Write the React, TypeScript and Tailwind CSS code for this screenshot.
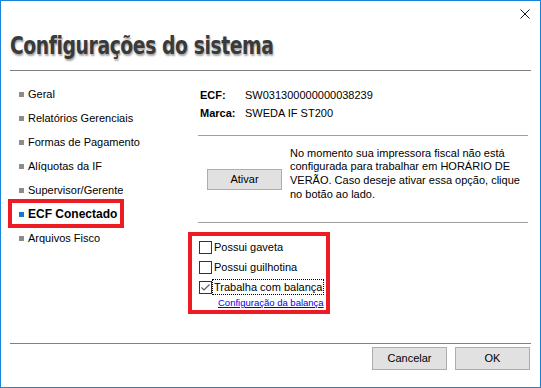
import React from 'react';

const navItems = [
  'Geral',
  'Relatórios Gerenciais',
  'Formas de Pagamento',
  'Alíquotas da IF',
  'Supervisor/Gerente',
  'ECF Conectado',
  'Arquivos Fisco',
];

const Checkbox: React.FC<{ label: string; checked?: boolean; focused?: boolean }> = ({
  label,
  checked = false,
  focused = false,
}) => (
  <div className="h-[20px] flex items-center">
    <span className="w-[13px] h-[13px] border border-[#333333] bg-white flex items-center justify-center">
      {checked && (
        <svg width="11" height="11" viewBox="0 0 11 11">
          <path d="M1.5 5.5 L4 8 L9.5 2.5" fill="none" stroke="#5a5a5a" strokeWidth="1.1" />
        </svg>
      )}
    </span>
    <span
      className={`ml-[1px] px-[1px] leading-[14px] ${
        focused ? 'outline outline-1 outline-dotted outline-black' : ''
      }`}
    >
      {label}
    </span>
  </div>
);

export default function App() {
  return (
    <div className="w-[541px] h-[388px] border border-[#1883d7] bg-white relative flex flex-col font-['Liberation_Sans',sans-serif] text-[11px] text-black overflow-hidden">
      {/* close */}
      <div className="h-[26px] flex justify-end items-start pt-[8px] pr-[10px]">
        <svg width="10" height="10" viewBox="0 0 10 10">
          <path d="M0.5 0.5 L9.5 9.5 M9.5 0.5 L0.5 9.5" stroke="#1a1a1a" strokeWidth="1" />
        </svg>
      </div>

      {/* title */}
      <div className="mx-[9px] h-[44px] border-b border-[#808080]">
        <h1 className="pt-[3px] origin-left scale-x-[0.835] font-['DejaVu_Sans_Condensed','DejaVu_Sans',sans-serif] font-bold text-[25px] leading-[32px] text-[#3a3a3a] tracking-[-0.5px] whitespace-nowrap [text-shadow:1px_2px_2px_rgba(0,0,0,0.35)]">
          Configurações do sistema
        </h1>
      </div>

      {/* body */}
      <div className="flex h-[272px]">
        <nav className="w-[197px] pt-[11px]">
          {navItems.map((item) => {
            const active = item === 'ECF Conectado';
            return (
              <div key={item} className="h-6 flex items-center pl-[18px]">
                <span className={`w-[5px] h-[5px] ${active ? 'bg-[#0a78d7]' : 'bg-[#8c8c8c]'}`} />
                <span className={`ml-[4px] ${active ? 'font-bold text-[12px]' : 'text-[11px]'}`}>{item}</span>
              </div>
            );
          })}
        </nav>

        <div className="flex-1 pr-[12px] flex flex-col">
          <div className="pt-[15px] pl-[2px] h-[64px]">
            <div className="h-[18px] flex items-center">
              <span className="w-[45px] font-bold">ECF:</span>
              <span>SW031300000000038239</span>
            </div>
            <div className="h-[18px] flex items-center">
              <span className="w-[45px] font-bold">Marca:</span>
              <span>SWEDA IF ST200</span>
            </div>
          </div>

          <div className="h-[88px] border-t border-b border-[#a0a0a0] flex items-center">
            <button className="ml-[9px] w-[75px] h-[21px] bg-[#e1e1e1] border border-[#adadad] text-[11px]">
              Ativar
            </button>
            <p className="ml-[8px] leading-[13.7px] -mt-[10px]">
              No momento sua impressora fiscal não está
              <br />
              configurada para trabalhar em HORÁRIO DE
              <br />
              VERÃO. Caso deseje ativar essa opção, clique
              <br />
              no botão ao lado.
            </p>
          </div>

          <div className="pt-[14px] pl-[1px]">
            <Checkbox label="Possui gaveta" />
            <Checkbox label="Possui guilhotina" />
            <Checkbox label="Trabalha com balança" checked focused />
            <a href="#" className="block ml-[19px] text-[9.5px] leading-[12px] text-[#0000ee] underline">
              Configuração da balança
            </a>
          </div>
        </div>
      </div>

      {/* footer */}
      <div className="mx-[9px] border-t border-[#808080] pr-[1px] pt-[3px] flex justify-end gap-[8px]">
        <button className="w-[75px] h-[23px] bg-[#e1e1e1] border border-[#adadad]">Cancelar</button>
        <button className="w-[75px] h-[23px] bg-[#e1e1e1] border border-[#adadad]">OK</button>
      </div>

      {/* highlight boxes */}
      <div className="absolute left-[7px] top-[198px] w-[116px] h-[29px] border-[4px] border-[#ed1c24] pointer-events-none" />
      <div className="absolute left-[187px] top-[231px] w-[142px] h-[82px] border-[4px] border-[#ed1c24] pointer-events-none" />
    </div>
  );
}
